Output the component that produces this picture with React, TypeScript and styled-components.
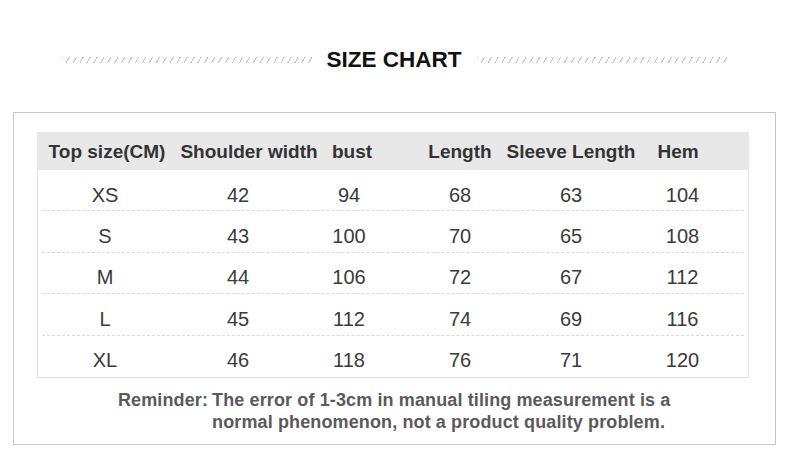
import styled, { createGlobalStyle } from "styled-components";

const GlobalStyle = createGlobalStyle`
  html, body {
    margin: 0;
    padding: 0;
    background: #fff;
  }
  body {
    font-family: "Liberation Sans", Arial, sans-serif;
  }
`;

const Page = styled.div`
  width: 790px;
  height: 459px;
  background: #fff;
  padding-top: 46px;
  box-sizing: border-box;
`;

const TitleRow = styled.div`
  display: flex;
  align-items: center;
  justify-content: center;
  gap: 15px;
  height: 28px;
  padding-right: 2px;
`;

const Hatch = styled.div`
  width: 250px;
  height: 6px;
  background: repeating-linear-gradient(
    120deg,
    #c4c4c4 0px,
    #c4c4c4 1px,
    transparent 1px,
    transparent 6px
  );
`;

const Title = styled.h1`
  margin: 0;
  font-size: 22.5px;
  font-weight: 700;
  color: #111;
  white-space: nowrap;
`;

const Box = styled.section`
  margin: 38px 0 0 13px;
  width: 763px;
  height: 333px;
  box-sizing: border-box;
  border: 1px solid #c6c6c6;
  padding: 19px 26px 0 23px;
`;

const Table = styled.div`
  width: 712px;
  border: 1px solid #e3e3e3;
  border-top: none;
  box-sizing: border-box;
`;

const cols = "136px 130px 92px 130px 92px 1fr";

const HeadRow = styled.div`
  display: grid;
  grid-template-columns: ${cols};
  height: 38px;
  align-items: center;
  background: #e8e8e8;
  margin: 0 -1px;
`;

const HeadCell = styled.div<{ $shift?: number }>`
  display: flex;
  justify-content: center;
  white-space: nowrap;
  font-size: 19px;
  font-weight: 700;
  color: #333;
  padding-top: 2px;
  span {
    margin-left: ${(p) => (p.$shift ?? 0) * 2}px;
  }
`;

const Row = styled.div<{ $last?: boolean }>`
  position: relative;
  display: grid;
  grid-template-columns: ${cols};
  height: 41.4px;
  box-sizing: border-box;
  align-items: center;
  padding-top: 9px;
  margin-left: -1px;

  &::after {
    content: "";
    display: ${(p) => (p.$last ? "none" : "block")};
    position: absolute;
    left: 5px;
    right: 4px;
    bottom: 0;
    border-bottom: 1px dashed #d9d9d9;
  }
`;

const Cell = styled.div`
  text-align: center;
  font-size: 20px;
  color: #3a3a3a;
`;

const Reminder = styled.div`
  display: flex;
  margin: 11px 0 0 81px;
  font-size: 18px;
  font-weight: 700;
  letter-spacing: 0.12px;
  color: #5a5a5a;
  line-height: 22.5px;
  white-space: nowrap;
`;

const Label = styled.span`
  margin-right: 4px;
`;

const heads: { label: string; shift?: number }[] = [
  { label: "Top size(CM)", shift: 2 },
  { label: "Shoulder width", shift: 11 },
  { label: "bust", shift: 3 },
  { label: "Length" },
  { label: "Sleeve Length" },
  { label: "Hem", shift: -5 },
];

const rows = [
  ["XS", "42", "94", "68", "63", "104"],
  ["S", "43", "100", "70", "65", "108"],
  ["M", "44", "106", "72", "67", "112"],
  ["L", "45", "112", "74", "69", "116"],
  ["XL", "46", "118", "76", "71", "120"],
];

export default function App() {
  return (
    <>
      <GlobalStyle />
      <Page>
        <TitleRow>
          <Hatch />
          <Title>SIZE CHART</Title>
          <Hatch />
        </TitleRow>
        <Box>
          <Table>
            <HeadRow>
              {heads.map((h) => (
                <HeadCell key={h.label} $shift={h.shift}>
                  <span>{h.label}</span>
                </HeadCell>
              ))}
            </HeadRow>
            {rows.map((r, i) => (
              <Row key={r[0]} $last={i === rows.length - 1}>
                {r.map((v, j) => (
                  <Cell key={j}>{v}</Cell>
                ))}
              </Row>
            ))}
          </Table>
          <Reminder>
            <Label>Reminder:</Label>
            <div>
              The error of 1-3cm in manual tiling measurement is a
              <br />
              normal phenomenon, not a product quality problem.
            </div>
          </Reminder>
        </Box>
      </Page>
    </>
  );
}
